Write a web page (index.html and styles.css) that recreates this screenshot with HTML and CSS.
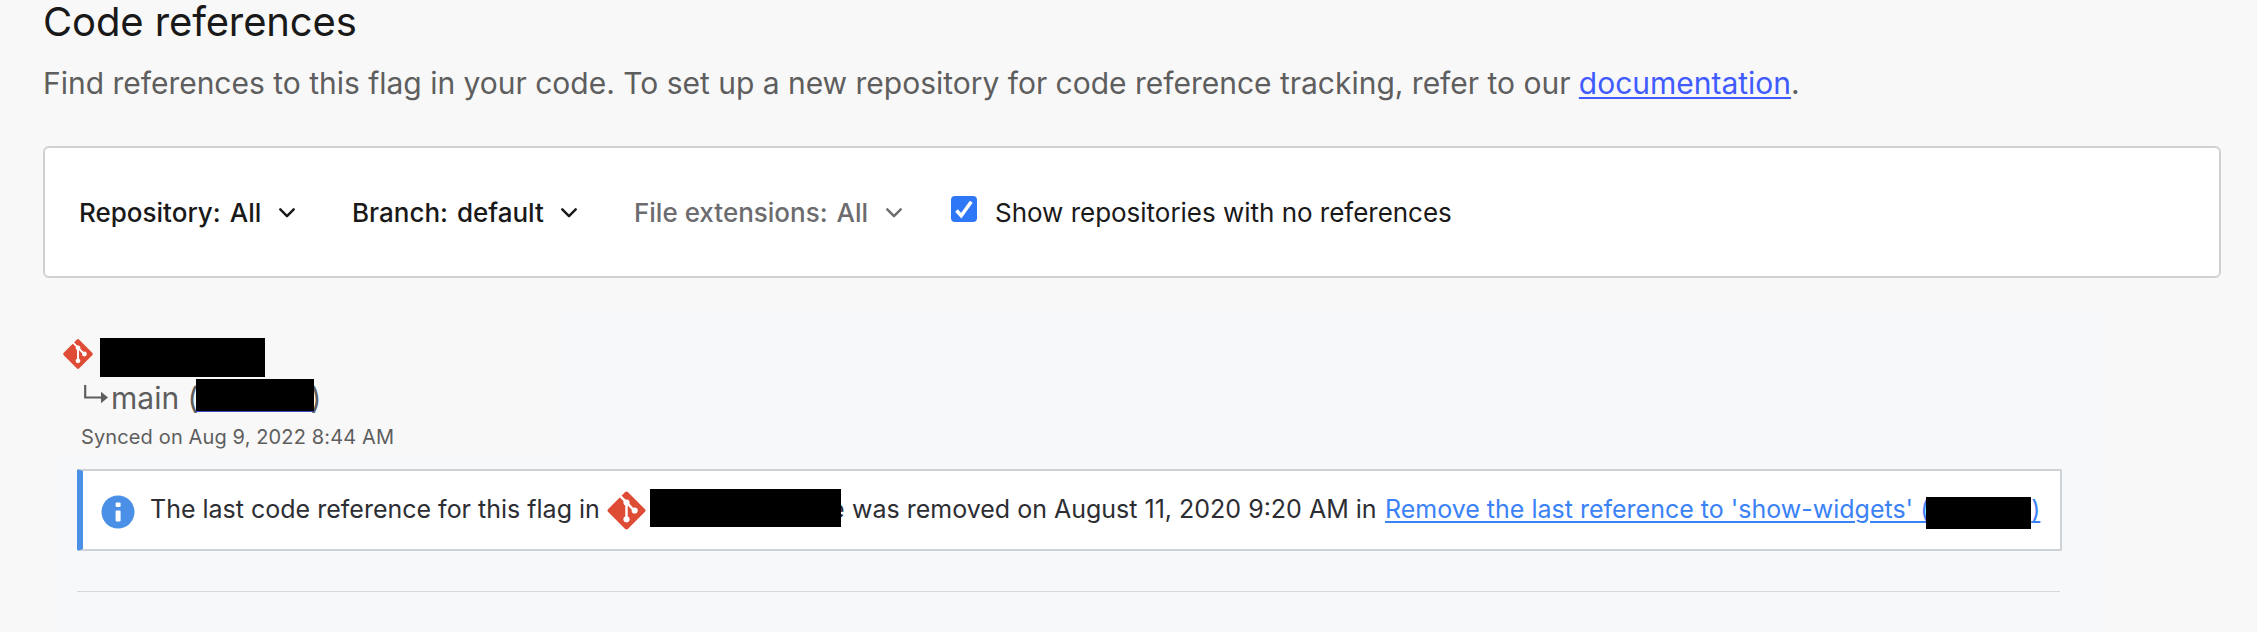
FILE: index.html
```html
<!DOCTYPE html>
<html lang="en">
<head>
<meta charset="utf-8">
<title>Code references</title>
<link rel="stylesheet" href="styles.css">
</head>
<body>
<svg width="0" height="0" class="defs" aria-hidden="true">
  <symbol id="git" viewBox="0 0 40 40">
    <rect x="6.3" y="6.3" width="27.4" height="27.4" rx="2.2" transform="rotate(45 20 20)" fill="#de4c36"/>
    <g stroke="#fff" stroke-width="2.4" fill="none"><path d="M13.5 5.5 20 12V28M20 12l7.500 8"/></g>
    <g fill="#fff"><circle cx="20" cy="12.300" r="3"/><circle cx="28" cy="20" r="3"/><circle cx="20" cy="28.500" r="3"/></g>
  </symbol>
  <symbol id="chevron" viewBox="0 0 16 10">
    <path d="M1.300 1.300 8 8.200l6.700-6.900" fill="none" stroke="currentColor" stroke-width="2.400" stroke-linecap="round" stroke-linejoin="round"/>
  </symbol>
</svg>
<main class="page">
  <h1 class="title">Code references</h1>
  <p class="intro">Find references to this flag in your code. To set up a new repository for code reference tracking, refer to our <a class="doc-link" href="#">documentation</a>.</p>

  <section class="filters">
    <button class="filter filter-repo"><span class="name">Repository:</span><span class="value">All</span><svg class="chevron"><use href="#chevron"/></svg></button>
    <button class="filter filter-branch"><span class="name">Branch:</span><span class="value">default</span><svg class="chevron"><use href="#chevron"/></svg></button>
    <button class="filter filter-ext"><span class="name">File extensions:</span><span class="value">All</span><svg class="chevron"><use href="#chevron"/></svg></button>
    <label class="check">
      <svg class="box" viewBox="0 0 26 26"><rect width="26" height="26" rx="4" fill="#2e77f6"/><path d="M5.500 14.500l4.700 5.200L20.300 5.800" fill="none" stroke="#fff" stroke-width="3.600"/></svg>
      <span class="check-text">Show repositories with no references</span>
    </label>
  </section>

  <section class="results">
    <div class="repo"><svg class="git"><use href="#git"/></svg><span class="redacted redacted-repo"></span></div>
    <div class="branch">
      <svg class="arrow" viewBox="0 0 24 19"><path d="M1.200 0V12.500H18" fill="none" stroke="#5e5e5e" stroke-width="2.200"/><path d="M17 6.800l7 5.700-7 5.700z" fill="#5e5e5e"/></svg>
      <span class="branch-name">main (</span><span class="redacted redacted-sha"></span><span class="close">)</span>
    </div>
    <p class="synced">Synced on Aug 9, 2022 8:44 AM</p>
    <div class="notice">
      <svg class="info" viewBox="0 0 34 34"><circle cx="17" cy="17" r="16.500" fill="#4a90e6"/><g fill="#fff"><rect x="14.600" y="7.500" width="5" height="4.600" rx="1"/><rect x="14.600" y="15.500" width="5" height="11" rx="1"/></g></svg>
      <span class="lead">The last code reference for this flag in</span>
      <svg class="git git-large"><use href="#git"/></svg>
      <span class="redacted redacted-name"></span><span class="tail">e</span>
      <span class="when">was removed on August 11, 2020 9:20 AM in</span>
      <a class="commit" href="#"><span>Remove the last reference to 'show-widgets' (</span><span class="redacted redacted-commit"></span><span>)</span></a>
    </div>
    <hr class="rule">
  </section>
</main>
</body>
</html>
```

FILE: styles.css
```css
* { box-sizing: border-box; }
body {
  margin: 0;
  background: #f8f8f8;
  color: #191919;
  font-family: Inter, "Liberation Sans", sans-serif;
}
.defs { position: absolute; }
.page { height: 632px; padding: 0 36px 0 43px; }
.title { margin: 0; font-size: 40px; font-weight: 400; line-height: 44px; letter-spacing: -0.12px; }
.intro { margin: 19px 0 0; font-size: 30px; line-height: 40px; letter-spacing: -0.012px; color: #5e5e5e; white-space: nowrap; }
.doc-link { color: #405bff; text-decoration-thickness: 2px; text-underline-offset: 3px; }

.filters {
  display: flex;
  height: 132px;
  margin-top: 43px;
  padding: 47px 34px 0;
  border: 2px solid #d1d1d1;
  border-radius: 6px;
  background: #fff;
  font-size: 26px;
  line-height: 36px;
}
.filter {
  display: flex;
  align-items: center;
  height: 36px;
  padding: 0;
  border: 0;
  background: none;
  font: inherit;
  font-weight: 500;
  color: #191919;
  white-space: nowrap;
}
.filter-repo { width: 273px; }
.filter-branch { width: 282px; }
.filter-ext { width: 317px; color: #6c6c6f; }
.value { margin-left: 9px; }
.chevron { width: 16px; height: 10px; margin: 0 0 1px 17.5px; }
.check { display: flex; white-space: nowrap; letter-spacing: -0.02px; }
.box { width: 26px; height: 26px; margin: 1px 18px 0 0; }

.results {
  margin: 30px 118px 0 13px;
  padding: 30px 0 0 21px;
  height: 324px;
  background: #f7f8fa linear-gradient(#f8f8f8, #f8f8f8) no-repeat 0 0 / 504px 150px;
}
.repo { display: flex; margin-left: -15px; height: 39px; }
.git { flex: none; width: 32px; height: 32px; }
.redacted { flex: none; background: #000; }
.redacted-repo { width: 165px; height: 39px; margin-left: 6px; }
.branch { display: flex; height: 42px; margin-left: 7px; font-size: 30px; line-height: 42px; color: #5e5e5e; white-space: pre; }
.arrow { width: 24px; height: 19px; margin: 8px 3px 0 0; }
.redacted-sha { width: 118px; height: 33px; margin: 2px 0 0 -3px; border-bottom: 1px solid #3a4bc0; z-index: 1; }
.close { margin-left: -3px; }
.synced { margin: 5px 0 0 4px; font-size: 20px; line-height: 26px; letter-spacing: 0.13px; color: #5e5e5e; }
.notice {
  display: flex;
  width: 1985px;
  height: 82px;
  margin-top: 19px;
  border: 2px solid #cdd1d8;
  border-left: 6px solid #4a90e6;
  border-radius: 2px;
  background: #fff;
  font-size: 25px;
  line-height: 36px;
  color: #2c2e33;
  white-space: nowrap;
  padding-top: 20px;
}
.info { flex: none; width: 34px; height: 34px; margin: 4px 15px 0 18px; }
.lead { width: 456px; }
.git-large { width: 41px; height: 41px; margin: -1px 3px 0 0; }
.redacted-name { width: 191px; height: 38px; margin-top: -2px; z-index: 1; }
.tail { margin-left: -11px; width: 22px; }
.when { width: 533px; }
.commit { display: flex; color: #3b82f6; text-decoration-thickness: 2px; text-underline-offset: 3px; }
.redacted-commit { width: 105px; height: 32px; margin: 6px 0 0 -3px; z-index: 1; }
.rule { width: 1983px; height: 1px; margin: 40px 0 0; border: 0; background: #d5d8dc; }
```
